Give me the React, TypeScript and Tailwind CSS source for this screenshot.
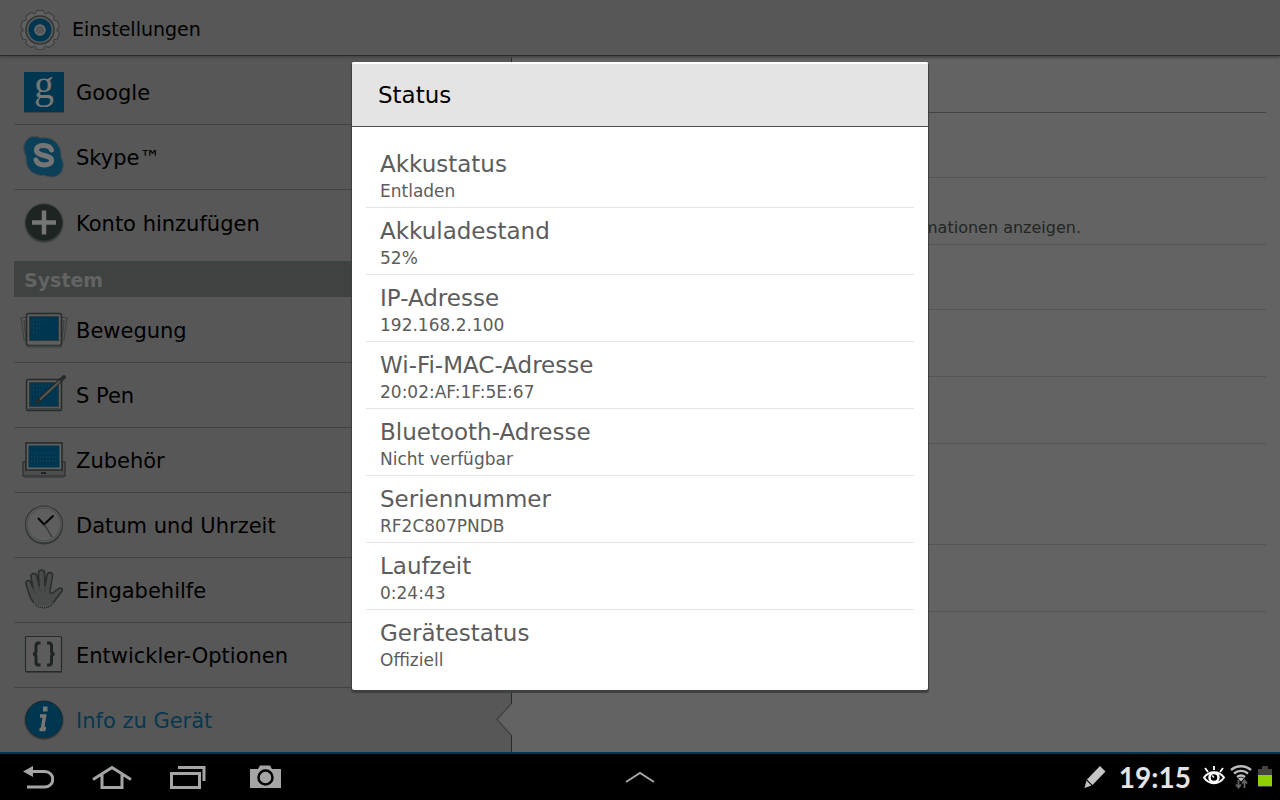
import type { ReactNode } from 'react';

interface StatusEntry {
  label: string;
  value: string;
}

interface MenuEntry {
  label: string;
  icon: ReactNode;
}

const statusEntries: StatusEntry[] = [
  { label: 'Akkustatus', value: 'Entladen' },
  { label: 'Akkuladestand', value: '52%' },
  { label: 'IP-Adresse', value: '192.168.2.100' },
  { label: 'Wi-Fi-MAC-Adresse', value: '20:02:AF:1F:5E:67' },
  { label: 'Bluetooth-Adresse', value: 'Nicht verfügbar' },
  { label: 'Seriennummer', value: 'RF2C807PNDB' },
  { label: 'Laufzeit', value: '0:24:43' },
  { label: 'Gerätestatus', value: 'Offiziell' },
];

const GearIcon = () => (
  <svg className="w-10 h-10" viewBox="0 0 40 40">
    {[0, 36, 72, 108, 144, 180, 216, 252, 288, 324].map((angle) => (
      <rect key={angle} x="15.5" y="0.5" width="9" height="9" rx="3" fill="#606060" stroke="#383c3a" transform={`rotate(${angle} 20 20)`} />
    ))}
    <circle cx="20" cy="20" r="16.5" fill="#606060" />
    <circle cx="20" cy="20" r="14" fill="#5c5c5c" stroke="#303633" strokeWidth="1.5" />
    <circle cx="20" cy="20" r="8.500" fill="none" stroke="#00364f" strokeWidth="6" />
    <circle cx="20" cy="20" r="5" fill="#575757" stroke="#6c6c6c" strokeWidth="1.5" />
  </svg>
);

const GoogleIcon = () => (
  <svg className="w-11 h-11 overflow-visible" viewBox="0 0 44 44">
    <rect x="2" y="3" width="40" height="40" fill="#444" />
    <rect x="2" y="2" width="40" height="40" fill="#00364f" />
    <text x="22" y="28" textAnchor="middle" className="font-['Liberation_Serif',serif] text-[40px]" fill="#777">
      g
    </text>
  </svg>
);

const SkypeIcon = () => (
  <svg className="w-11 h-11" viewBox="0 0 44 44">
    <path d="M12 1.500c3 0 5 .5 7 1.500 12-2 21 7 20 19 5 9 1 20-9 20-3 0-5-.5-7-1.500-12 1-20-7-19-19C-1 13 3 1.500 12 1.500z" fill="#0c4059" stroke="#464b4b" />
    <path d="M29.500 15c-2-6-15-6-15 0 0 7 15 4 15 10.500 0 6-13.500 6-15.500-.5" fill="none" stroke="#757575" strokeWidth="5" strokeLinecap="round" />
  </svg>
);

const PlusIcon = () => (
  <svg className="w-11 h-11" viewBox="0 0 44 44">
    <circle cx="22" cy="22.500" r="19.500" fill="#404442" />
    <circle cx="22" cy="21.500" r="18.500" fill="#1e2421" stroke="#303633" />
    <path d="M22 9.500v24M10 21.500h24" stroke="#757575" strokeWidth="4.500" />
  </svg>
);

const MotionIcon = () => (
  <svg className="w-11 h-11 overflow-visible" viewBox="0 0 44 44">
    <g fill="none" stroke="#3c4240" strokeWidth="1.200">
      <path d="M5 9l-6 1 3 21 3 3M39 9l6 1-3 21-3 3" />
      <path d="M5 12l-3 1 2 17M39 12l3 1-2 17" />
    </g>
    <rect x="4.500" y="5.500" width="35" height="32" rx="2" fill="#5c5c5c" stroke="#252b28" strokeWidth="1.500" />
    <rect x="7.500" y="8.500" width="29" height="24" fill="#00364f" stroke="#30383b" />
    <path d="M6 35h32" stroke="#707070" strokeDasharray="1 2" />
    <path d="M5 38.500h35" stroke="#404442" strokeWidth="2" />
    <path d="M11 12h15M11 16h9M11 20h7M11 24h6" stroke="#2e4b59" strokeDasharray="1 2" />
  </svg>
);

const PenIcon = () => (
  <svg className="w-11 h-11 overflow-visible" viewBox="0 0 44 44">
    <rect x="4.500" y="6.500" width="35" height="31" rx="2" fill="#5c5c5c" stroke="#252b28" strokeWidth="1.500" />
    <rect x="7.500" y="9.500" width="29" height="24" fill="#00364f" stroke="#30383b" />
    <path d="M6 36h32" stroke="#404442" strokeWidth="2" />
    <path d="M11 13h16M11 17h12M11 21h8" stroke="#2e4b59" strokeDasharray="1 2" />
    <path d="M15 29L42 4" stroke="#252b28" strokeWidth="4" strokeLinecap="round" />
    <path d="M18 26.500L38 8" stroke="#565656" strokeWidth="2" />
  </svg>
);

const DockIcon = () => (
  <svg className="w-11 h-11 overflow-visible" viewBox="0 0 44 44">
    <path d="M1 24h3v6h36v-6h3v14H1z" fill="#4c4e4d" stroke="#303633" strokeWidth="1.500" />
    <rect x="4" y="5" width="36" height="27" fill="#626262" stroke="#252b28" strokeWidth="1.500" />
    <rect x="6.500" y="7.500" width="31" height="22" fill="#00364f" />
    <path d="M9 15h26M9 19h26M9 23h26" stroke="#2e4b59" strokeDasharray="1 2" />
    <path d="M19 35h5" stroke="#1e2421" strokeWidth="2" />
    <path d="M2 39.500h40" stroke="#404442" />
  </svg>
);

const ClockIcon = () => (
  <svg className="w-11 h-11" viewBox="0 0 44 44">
    <circle cx="22" cy="22.500" r="19" fill="#333936" />
    <circle cx="22" cy="21.500" r="18.500" fill="#5e5e5e" stroke="#303633" strokeWidth="1.200" />
    <circle cx="22" cy="21.500" r="16.500" fill="none" stroke="#484c4a" />
    <path d="M16 15l6 6.500 9.500-9" fill="none" stroke="#080a09" strokeWidth="2" />
    <path d="M22 21l8 13" stroke="#303633" strokeWidth="1.200" />
  </svg>
);

const HandIcon = () => (
  <svg className="w-11 h-11" viewBox="0 0 44 44">
    <path d="M13 36C8 31 7 26 4 16c-1-4 4-5 5-1l2 5-2-11c-1-4 5-5 6-1l2 10-.500-13c0-4 6-4 6 0L23 18l2-11c1-4 6-3 5.500 1L28 23c0 3 2 3 4 1l4-3c3-2 5-1 4 2L31 35c-4 6-13 6-18 1z" fill="#484b49" stroke="#282d2a" strokeWidth="1.500" strokeLinejoin="round" />
    <path d="M11 20l2 5M17 18l1 5M23 18v5" stroke="#3a3f3c" />
    <path d="M12 35c5 5 14 5 19 0" fill="none" stroke="#5c5c5c" strokeWidth="2" strokeDasharray="1 1" />
  </svg>
);

const BracesIcon = () => (
  <svg className="w-11 h-11" viewBox="0 0 44 44">
    <rect x="4" y="5" width="36" height="35" fill="#393d3b" />
    <rect x="3.500" y="3.500" width="36" height="35" rx="1" fill="#5c5c5c" stroke="#252b28" strokeWidth="1.200" />
    <path d="M18.500 10h-2c-2 0-2.500 1-2.500 3v5c0 2-1 3-3 3 2 0 3 1 3 3v5c0 2 .5 3 2.500 3h2M25 10h2c2 0 2.500 1 2.500 3v5c0 2 1 3 3 3-2 0-3 1-3 3v5c0 2-.5 3-2.500 3h-2" fill="none" stroke="#1e2421" strokeWidth="3" />
  </svg>
);

const InfoIcon = () => (
  <svg className="w-11 h-11" viewBox="0 0 44 44">
    <circle cx="22" cy="22.500" r="19.500" fill="#3c4240" />
    <circle cx="22" cy="21.500" r="18.500" fill="#00364f" stroke="#1d2b31" />
    <g stroke="#777" fill="none">
      <path d="M21 11h4.500" strokeWidth="5" />
      <path d="M18 18h4.500l-2 12.500h3.500M17.500 31.500h5.500" strokeWidth="3.500" />
    </g>
  </svg>
);

const accountItems: MenuEntry[] = [
  { label: 'Google', icon: <GoogleIcon /> },
  { label: 'Skype™', icon: <SkypeIcon /> },
];

const systemItems: MenuEntry[] = [
  { label: 'Bewegung', icon: <MotionIcon /> },
  { label: 'S Pen', icon: <PenIcon /> },
  { label: 'Zubehör', icon: <DockIcon /> },
  { label: 'Datum und Uhrzeit', icon: <ClockIcon /> },
  { label: 'Eingabehilfe', icon: <HandIcon /> },
  { label: 'Entwickler-Optionen', icon: <BracesIcon /> },
];

function MenuRow({ label, icon }: MenuEntry) {
  return (
    <button className="flex h-[65px] w-full shrink-0 items-center gap-2.5 border-b border-[#404342] pl-2 text-left text-[21px] text-black">
      {icon}
      <span className="pt-1">{label}</span>
    </button>
  );
}

function Sidebar() {
  return (
    <nav className="relative flex w-2/5 shrink-0 flex-col border-r border-[#252b28] bg-[#575757] pt-1 pl-3.5">
      {accountItems.map((item) => (
        <MenuRow key={item.label} {...item} />
      ))}
      <button className="mb-1.5 flex h-[65px] w-full shrink-0 items-center gap-2.5 pl-2 text-left text-[21px] text-black">
        <PlusIcon />
        <span className="pt-1">Konto hinzufügen</span>
      </button>
      <h2 className="mb-px flex h-9 shrink-0 items-center bg-[#3e4241] pt-0.5 pl-2.5 text-[19px] font-bold text-[#636363]">
        System
      </h2>
      {systemItems.map((item) => (
        <MenuRow key={item.label} {...item} />
      ))}
      <button className="relative flex h-16 w-full shrink-0 items-center gap-2.5 pl-2 text-left text-[21px] text-[#08384f]">
        <InfoIcon />
        <span className="pt-1">Info zu Gerät</span>
        {/* Selection notch */}
        <svg className="absolute top-3.5 -right-px h-9 w-5" viewBox="0 0 20 36">
          <path d="M20 2h-1L5 17.500 19 33h1z" fill="#636363" />
          <path d="M19 2L5 17.500 19 33" fill="none" stroke="#404442" strokeWidth="1.500" />
        </svg>
      </button>
    </nav>
  );
}

function DetailPane() {
  return (
    <section className="min-w-0 flex-1 overflow-hidden bg-[#636363] px-3.5">
      <div className="h-[57px] border-b border-[#424444]" />
      <div className="h-[65px] border-b border-[#555]" />
      <div className="flex h-[67px] items-end justify-end border-b border-[#555] pr-[185px] pb-1">
        <p className="text-[16px] leading-6 whitespace-nowrap text-[#1f2623]">Informationen anzeigen.</p>
      </div>
      <div className="h-[65px] border-b border-[#555]" />
      <div className="h-[67px] border-b border-[#555]" />
      <div className="h-[67px] border-b border-[#555]" />
      <div className="h-[101px] border-b border-[#555]" />
      <div className="h-[67px] border-b border-[#555]" />
    </section>
  );
}

function StatusDialog() {
  return (
    <div className="absolute inset-0 flex items-center justify-center">
      <div role="dialog" aria-labelledby="dialog-title" className="w-[45%] rounded-[2px] bg-white shadow-[0_2px_1px_1px_#3c403e]">
        <h2 id="dialog-title" className="flex h-[65px] items-center rounded-t-[2px] border-t-2 border-b border-t-white border-b-[#4c4f4e] bg-[#e4e4e4] px-[26px] text-[23px] text-black">
          Status
        </h2>
        <dl className="p-3.5">
          {statusEntries.map((entry) => (
            <div key={entry.label} className="border-b border-[#e4e4e4] px-3.5 pt-[9px] pb-[5px] text-[#5c5c5c] last:border-b-0">
              <dt className="text-[23px] leading-7">{entry.label}</dt>
              <dd className="pt-0.5 text-[17px] leading-[22px]">{entry.value}</dd>
            </div>
          ))}
        </dl>
      </div>
    </div>
  );
}

function SystemBar() {
  return (
    <footer className="grid h-12 shrink-0 grid-cols-[1fr_auto_1fr] items-center border-t-2 border-[#00364f] bg-black">
      <div className="flex items-center pl-[22px]">
        <button aria-label="Zurück" className="mr-[38px]">
          <svg className="h-6 w-8" viewBox="0 0 32 24">
            <path d="M1 6.500L11 1v11z" fill="#a5a5a5" />
            <path d="M10 6.500h13a7.750 7.750 0 0 1 0 15.500H5" fill="none" stroke="#a5a5a5" strokeWidth="3" />
          </svg>
        </button>
        <button aria-label="Startseite" className="mr-[38px]">
          <svg className="h-6 w-10" viewBox="0 0 40 24" fill="none" stroke="#a5a5a5" strokeWidth="3">
            <path d="M1 14.500L20 2.500l19 12M10 10v12.500h20V10" />
          </svg>
        </button>
        <button aria-label="Letzte Apps" className="mr-11">
          <svg className="h-6 w-9" viewBox="0 0 36 24" fill="none" stroke="#a5a5a5" strokeWidth="3">
            <path d="M1.500 8.500h28v14h-28zM8 2.500h26v13.500" />
          </svg>
        </button>
        <button aria-label="Bildschirmfoto">
          <svg className="h-6 w-8" viewBox="0 0 32 24">
            <path d="M0 4h8l2-3.500h10L22 4h9v19H0z" fill="#a5a5a5" />
            <circle cx="15.500" cy="12.500" r="7" fill="#a5a5a5" stroke="#000" strokeWidth="2.500" />
          </svg>
        </button>
      </div>
      <button aria-label="Mini-Apps">
        <svg className="h-3 w-[30px]" viewBox="0 0 30 12">
          <path d="M1 11L15 2l14 9" fill="none" stroke="#a5a5a5" strokeWidth="2" />
        </svg>
      </button>
      <div className="flex items-center justify-end pr-2">
        <svg className="mr-3 h-6 w-6" viewBox="0 0 24 24">
          <path d="M17 1l5.500 5.500L9.500 20 4 14.500zM3.500 15.500L8.500 20.500l-7 2.500z" fill="#c4c4c4" />
        </svg>
        <time className="mr-3 font-[Lato] text-[28px] leading-8 font-bold text-[#e4e4e4]">19:15</time>
        <svg className="mr-[5px] h-6 w-[22px]" viewBox="0 0 22 24" fill="none" stroke="#fff">
          <path d="M11 1v4M2 3l3 4M20 3l-3 4" strokeWidth="1.800" />
          <path d="M1 12.500c5-7 15-7 20 0-5 7.500-15 7.500-20 0z" strokeWidth="2" />
          <circle cx="11" cy="12.500" r="4.500" strokeWidth="2.500" />
          <path d="M9 10.500l2 2" strokeWidth="1.500" />
        </svg>
        <svg className="mr-1.5 h-6 w-[22px]" viewBox="0 0 22 24" fill="none">
          <path d="M1 5c6-5 14-5 20 0M4 8.500c4-3.500 10-3.500 14 0M7 12c2.500-2 5.500-2 8 0" stroke="#bdbdbd" strokeWidth="2.400" />
          <path d="M8 13.500c2-1.500 4-1.500 6 0l-3 3z" fill="#bdbdbd" />
          <path d="M8.500 15v7M6 19.500l2.500 3 2.500-3M14.500 23v-7M12 18.500l2.500-3 2.500 3" stroke="#666" strokeWidth="1.800" />
        </svg>
        <svg className="h-[22px] w-3.5" viewBox="0 0 14 22">
          <path d="M0 3h4V0h6v3h4v18H0z" fill="#444" />
          <path d="M0 9h14v11H0z" fill="#8fd100" />
        </svg>
      </div>
    </footer>
  );
}

export default function App() {
  return (
    <div className="flex h-screen flex-col overflow-hidden bg-black font-['DejaVu_Sans',sans-serif]">
      <div className="relative flex min-h-0 flex-1 flex-col">
        <header className="relative z-10 flex h-14 shrink-0 items-center gap-3 border-b border-[#252b28] bg-[#575757] pt-1 pl-5 shadow-[0_2px_2px_#454847]">
          <GearIcon />
          <h1 className="text-[19px] text-black">Einstellungen</h1>
        </header>
        <main className="flex min-h-0 flex-1">
          <Sidebar />
          <DetailPane />
        </main>
        <StatusDialog />
      </div>
      <SystemBar />
    </div>
  );
}
